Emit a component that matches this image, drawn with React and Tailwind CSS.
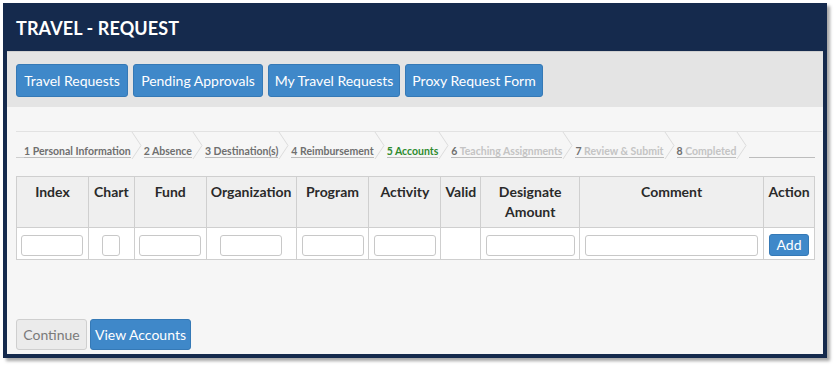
import React from "react";

const font = { fontFamily: "Lato, 'Open Sans', sans-serif" };

const columns = [
  { name: "Index", w: "w-[72px]", input: "w-[62px]" },
  { name: "Chart", w: "w-[46px]", input: "w-[18px]" },
  { name: "Fund", w: "w-[72px]", input: "w-[62px]" },
  { name: "Organization", w: "w-[90px]", input: "w-[62px]" },
  { name: "Program", w: "w-[73px]", input: "w-[62px]" },
  { name: "Activity", w: "w-[72px]", input: "w-[62px]" },
  { name: "Valid", w: "w-[40px]", input: null },
  { name: "Designate Amount", w: "w-[99px]", input: "w-[89px]" },
  { name: "Comment", w: "w-[184px]", input: "w-[173px]" },
];

const steps = [
  { n: "1", label: "Personal Information", state: "done" },
  { n: "2", label: "Absence", state: "done" },
  { n: "3", label: "Destination(s)", state: "done" },
  { n: "4", label: "Reimbursement", state: "done" },
  { n: "5", label: "Accounts", state: "current" },
  { n: "6", label: "Teaching Assignments", state: "todo" },
  { n: "7", label: "Review & Submit", state: "todo" },
  { n: "8", label: "Completed", state: "todo" },
];

function Chevron() {
  return (
    <svg width="13" height="27" viewBox="0 0 13 27" className="shrink-0">
      <polyline points="1,0 10,13.5 1,27" fill="none" stroke="#dcdcdc" strokeWidth="1" />
    </svg>
  );
}

function Steps() {
  return (
    <div className="flex items-stretch border-t border-[#e2e2e2] h-[27px] mr-[1px]">
      <div className="w-[8px] border-b border-[#cfcfcf] h-full"></div>
      {steps.map((s) => (
        <React.Fragment key={s.n}>
          <div className="flex items-end">
            <span className="border-b border-[#bdbdbd] text-[10.5px] font-bold leading-[11px] whitespace-nowrap">
              <span
                className={
                  s.state === "current" ? "text-[#2e8b2e]" : "text-[#6f6f6f]"
                }
              >
                {s.n}{" "}
              </span>
              <span
                className={
                  s.state === "current"
                    ? "text-[#2e8b2e]"
                    : s.state === "done"
                    ? "text-[#6f6f6f]"
                    : "text-[#c4c4c4]"
                }
              >
                {s.label}
              </span>
            </span>
          </div>
          <Chevron />
        </React.Fragment>
      ))}
      <div className="flex-1 border-b border-[#bdbdbd] h-full mr-[7px]"></div>
    </div>
  );
}

export default function App() {
  return (
    <div className="w-[836px] h-[366px] bg-white pt-[3px] pl-[3px]" style={font}>
      <div className="w-[824px] h-[355px] bg-[#152a4d] shadow-[3px_3px_3px_rgba(0,0,0,0.35)] flex flex-col px-[4px] pb-[4px]">
        {/* header */}
        <div className="h-[48px] flex items-center pl-[9px] pt-[2px]">
          <h1 className="text-white font-bold text-[18px] tracking-[0.1px]">
            TRAVEL - REQUEST
          </h1>
        </div>

        {/* nav buttons */}
        <div className="bg-[#e4e4e4] h-[56px] flex gap-[5px] pl-[9px] pt-[12px] border-t border-[#d0d0d0]">
          <button className="h-[33px] w-[112px] bg-[#3f88c9] border border-[#3579b6] rounded-[3px] text-white text-[14px]">
            Travel Requests
          </button>
          <button className="h-[33px] w-[130px] bg-[#3f88c9] border border-[#3579b6] rounded-[3px] text-white text-[14px]">
            Pending Approvals
          </button>
          <button className="h-[33px] w-[132px] bg-[#3f88c9] border border-[#3579b6] rounded-[3px] text-white text-[14px]">
            My Travel Requests
          </button>
          <button className="h-[33px] w-[138px] bg-[#3f88c9] border border-[#3579b6] rounded-[3px] text-white text-[14px]">
            Proxy Request Form
          </button>
        </div>

        {/* content */}
        <div className="flex-1 bg-[#f6f6f6] flex flex-col pl-[9px] pt-[24px]">
          <Steps />

          <table className="mt-[18px] border-collapse border border-[#cfcfcf] w-[799px]">
            <thead>
              <tr className="bg-[#efefef] h-[51px] align-top">
                {columns.map((c) => (
                  <th
                    key={c.name}
                    className={`${c.w} border border-[#cfcfcf] pt-[5px] px-[2px] text-[14px] font-bold text-[#2a2a2a] leading-[20px]`}
                  >
                    {c.name === "Designate Amount" ? (
                      <>
                        Designate
                        <br />
                        Amount
                      </>
                    ) : (
                      c.name
                    )}
                  </th>
                ))}
                <th className="w-[51px] border border-[#cfcfcf] pt-[5px] text-[14px] font-bold text-[#2a2a2a] leading-[20px]">
                  Action
                </th>
              </tr>
            </thead>
            <tbody>
              <tr className="bg-white h-[32px]">
                {columns.map((c) => (
                  <td key={c.name} className="border border-[#cfcfcf] text-center align-middle">
                    {c.input && (
                      <input
                        className={`${c.input} h-[21px] bg-white border border-[#c8c8c8] rounded-[3px] align-middle`}
                      />
                    )}
                  </td>
                ))}
                <td className="border border-[#cfcfcf] text-center align-middle">
                  <button className="h-[22px] w-[40px] bg-[#3f88c9] border border-[#3579b6] rounded-[3px] text-white text-[14px] leading-none">
                    Add
                  </button>
                </td>
              </tr>
            </tbody>
          </table>

          <div className="mt-auto mb-[4px] flex gap-[3px]">
            <button className="h-[31px] w-[71px] bg-[#ebebeb] border border-[#cfcfcf] rounded-[3px] text-[#7a7a7a] text-[14px]">
              Continue
            </button>
            <button className="h-[31px] w-[101px] bg-[#3f88c9] border border-[#3579b6] rounded-[3px] text-white text-[14px]">
              View Accounts
            </button>
          </div>
        </div>
      </div>
    </div>
  );
}
